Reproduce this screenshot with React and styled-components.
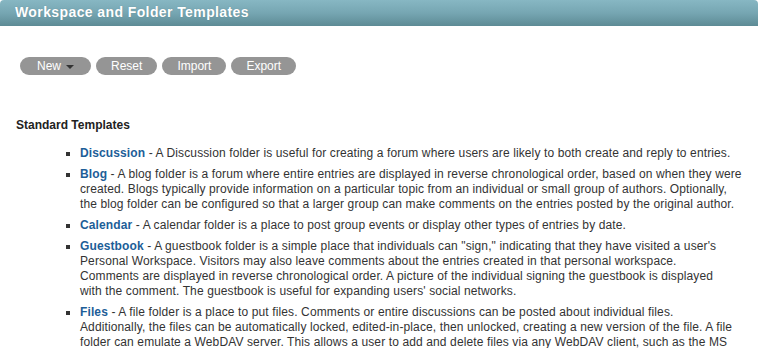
import React from "react";
import styled, { createGlobalStyle } from "styled-components";

const Global = createGlobalStyle`
  html, body { margin: 0; padding: 0; background: #fff; }
  body { font-family: "Liberation Sans", Arial, sans-serif; color: #333; }
`;

const Page = styled.div`
  width: 758px;
  overflow: hidden;
`;

const Header = styled.div`
  height: 26px;
  box-sizing: border-box;
  padding-left: 15px;
  border-radius: 4px 4px 0 0;
  background: linear-gradient(to bottom, #87b7c3 0%, #76a6b2 50%, #5d8b95 100%);
  color: #fff;
  font-weight: bold;
  font-size: 14px;
  letter-spacing: 0.4px;
  line-height: 24px;
  text-shadow: 0 0 1px rgba(40, 70, 80, 0.35);
`;

const Toolbar = styled.div`
  display: flex;
  gap: 5px;
  margin-top: 31px;
  padding-left: 20px;
`;

const Button = styled.button`
  display: inline-flex;
  align-items: center;
  justify-content: center;
  gap: 5px;
  height: 18px;
  padding: 0 ${(p) => p.$pad || 15}px;
  border: none;
  border-radius: 9px;
  background: #959595;
  color: #fff;
  font-family: "Liberation Sans", Arial, sans-serif;
  font-size: 12px;
  line-height: 18px;
  cursor: pointer;
`;

const Caret = styled.span`
  display: inline-block;
  width: 0;
  height: 0;
  margin-top: 2px;
  border-left: 4px solid transparent;
  border-right: 4px solid transparent;
  border-top: 4px solid #333;
`;

const SectionTitle = styled.div`
  margin-top: 43px;
  padding-left: 16px;
  font-size: 12px;
  line-height: 15px;
  font-weight: bold;
  color: #222;
`;

const List = styled.ul`
  list-style: none;
  margin: 13px 0 0 0;
  padding: 0 0 0 80px;
`;

const Item = styled.li`
  position: relative;
  margin-bottom: 6px;
  font-size: 12px;
  letter-spacing: 0.12px;
  line-height: 15px;
  white-space: nowrap;
  color: #333;

  &::before {
    content: "";
    position: absolute;
    left: -14px;
    top: 6px;
    width: 4px;
    height: 4px;
    background: #333;
  }
`;

const Name = styled.a`
  color: #1d5e98;
  font-weight: bold;
  text-decoration: none;
`;

const templates = [
  ["Discussion", [
    "A Discussion folder is useful for creating a forum where users are likely to both create and reply to entries.",
  ]],
  ["Blog", [
    "A blog folder is a forum where entire entries are displayed in reverse chronological order, based on when they were",
    "created. Blogs typically provide information on a particular topic from an individual or small group of authors. Optionally,",
    "the blog folder can be configured so that a larger group can make comments on the entries posted by the original author.",
  ]],
  ["Calendar", [
    "A calendar folder is a place to post group events or display other types of entries by date.",
  ]],
  ["Guestbook", [
    "A guestbook folder is a simple place that individuals can \"sign,\" indicating that they have visited a user's",
    "Personal Workspace. Visitors may also leave comments about the entries created in that personal workspace.",
    "Comments are displayed in reverse chronological order. A picture of the individual signing the guestbook is displayed",
    "with the comment. The guestbook is useful for expanding users' social networks.",
  ]],
  ["Files", [
    "A file folder is a place to put files. Comments or entire discussions can be posted about individual files.",
    "Additionally, the files can be automatically locked, edited-in-place, then unlocked, creating a new version of the file. A file",
    "folder can emulate a WebDAV server. This allows a user to add and delete files via any WebDAV client, such as the MS",
    "Windows Explorer.",
  ]],
];

export default function App() {
  return (
    <Page>
      <Global />
      <Header>Workspace and Folder Templates</Header>
      <Toolbar>
        <Button $pad={17}>
          New <Caret />
        </Button>
        <Button>Reset</Button>
        <Button>Import</Button>
        <Button>Export</Button>
      </Toolbar>
      <SectionTitle>Standard Templates</SectionTitle>
      <List>
        {templates.map(([name, lines]) => (
          <Item key={name}>
            <Name href="#">{name}</Name> -{" "}
            {lines.map((line, i) => (
              <React.Fragment key={i}>
                {i > 0 && <br />}
                {line}
              </React.Fragment>
            ))}
          </Item>
        ))}
      </List>
    </Page>
  );
}
